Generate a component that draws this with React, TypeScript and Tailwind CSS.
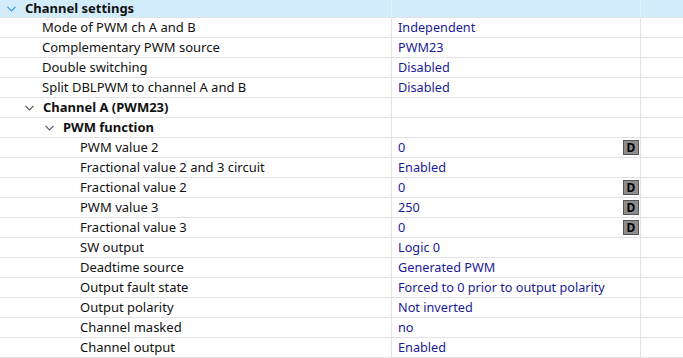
import React from 'react';

type Row = {
  label: string;
  value?: string;
  level: number;
  group?: boolean;
  button?: boolean;
};

const rows: Row[] = [
  { label: 'Mode of PWM ch A and B', value: 'Independent', level: 1 },
  { label: 'Complementary PWM source', value: 'PWM23', level: 1 },
  { label: 'Double switching', value: 'Disabled', level: 1 },
  { label: 'Split DBLPWM to channel A and B', value: 'Disabled', level: 1 },
  { label: 'Channel A (PWM23)', level: 1, group: true },
  { label: 'PWM function', level: 2, group: true },
  { label: 'PWM value 2', value: '0', level: 3, button: true },
  { label: 'Fractional value 2 and 3 circuit', value: 'Enabled', level: 3 },
  { label: 'Fractional value 2', value: '0', level: 3, button: true },
  { label: 'PWM value 3', value: '250', level: 3, button: true },
  { label: 'Fractional value 3', value: '0', level: 3, button: true },
  { label: 'SW output', value: 'Logic 0', level: 3 },
  { label: 'Deadtime source', value: 'Generated PWM', level: 3 },
  { label: 'Output fault state', value: 'Forced to 0 prior to output polarity', level: 3 },
  { label: 'Output polarity', value: 'Not inverted', level: 3 },
  { label: 'Channel masked', value: 'no', level: 3 },
  { label: 'Channel output', value: 'Enabled', level: 3 },
];

const Chevron = ({ color }: { color: string }) => (
  <svg width="9" height="6" viewBox="0 0 9 6" className="shrink-0">
    <polyline points="0.5,0.8 4.5,4.8 8.5,0.8" fill="none" stroke={color} strokeWidth="1.2" />
  </svg>
);

const DButton = () => (
  <div className="w-[16px] h-[15px] bg-[#8e8e8e] border border-[#555] flex items-center justify-center text-[12px] font-bold leading-none text-black mr-[1px]">
    D
  </div>
);

const indent: Record<number, string> = {
  1: 'pl-[42px]',
  2: 'pl-[42px]',
  3: 'pl-[80px]',
};

export default function App() {
  return (
    <div
      className="w-[683px] h-[358px] overflow-hidden bg-white text-[13px] text-[#111]"
      style={{ fontFamily: '"Noto Sans", "Open Sans", sans-serif' }}
    >
      {/* Header */}
      <div className="grid grid-cols-[392px_249px_1fr] h-[18px] bg-[#d2ecfb] border-b border-[#e2e2e2]">
        <div className="flex items-center gap-[9px] pl-[7px] border-r border-[#e8f4fc]">
          <Chevron color="#3d9ae0" />
          <span className="font-bold leading-none">Channel settings</span>
        </div>
        <div className="border-r border-[#e8f4fc]" />
        <div />
      </div>

      {rows.map((r, i) => (
        <div key={i} className="grid grid-cols-[392px_249px_1fr] h-[20px] border-b border-[#e2e2e2]">
          <div className="flex items-center border-r border-[#e2e2e2] overflow-hidden whitespace-nowrap">
            {r.group ? (
              <div className={`flex items-center gap-[9px] ${r.level === 1 ? 'pl-[25px]' : 'pl-[45px]'}`}>
                <Chevron color="#5a5a5a" />
                <span className="font-bold leading-none">{r.label}</span>
              </div>
            ) : (
              <span className={`${indent[r.level]} leading-none`}>{r.label}</span>
            )}
          </div>
          <div className="flex items-center justify-between border-r border-[#e2e2e2] pl-[6px] whitespace-nowrap">
            <span className="text-[#1a1a96] text-[12.7px] leading-none">{r.value}</span>
            {r.button && <DButton />}
          </div>
          <div />
        </div>
      ))}
    </div>
  );
}
